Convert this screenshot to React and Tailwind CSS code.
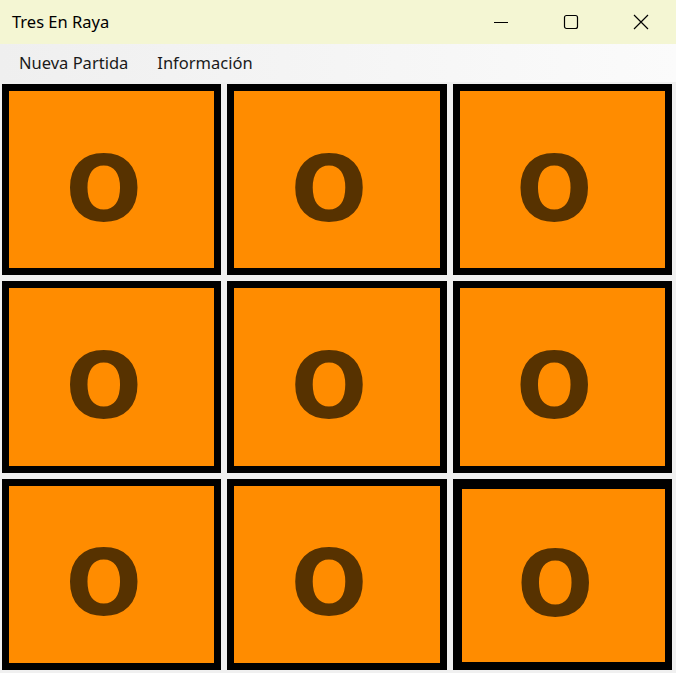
import React from "react";

const cells = Array.from({ length: 9 }, (_, i) => i);

function Cell({ i }) {
  const focused = i === 8;
  return (
    <div
      className={
        "bg-[#ff8c00] border-black flex items-center justify-center pr-[16px] pt-[20px] " +
        (focused ? "border-t-[10px] border-l-[9px] border-r-[7px] border-b-[8px]" : "border-[7px]")
      }
    >
      <span
        className="text-[#573200] font-bold leading-none text-[90px]"
        style={{ fontFamily: '"DejaVu Sans", sans-serif' }}
      >
        O
      </span>
    </div>
  );
}

export default function App() {
  return (
    <div
      className="w-[676px] h-[673px] flex flex-col bg-[#f0f0f0] overflow-hidden"
      style={{ fontFamily: '"Noto Sans", "Open Sans", sans-serif' }}
    >
      <div className="h-[44px] shrink-0 bg-[#f4f6d3] flex items-center">
        <span className="flex-1 pl-[12px] text-[16.5px] text-black">Tres En Raya</span>
        <div className="w-[70px] h-full flex items-center justify-center">
          <svg width="16" height="16" viewBox="0 0 16 16">
            <line x1="1" y1="8.5" x2="15" y2="8.5" stroke="#000" strokeWidth="1" />
          </svg>
        </div>
        <div className="w-[70px] h-full flex items-center justify-center">
          <svg width="16" height="16" viewBox="0 0 16 16">
            <rect x="1.5" y="1.5" width="13" height="13" rx="2" fill="none" stroke="#000" strokeWidth="1.2" />
          </svg>
        </div>
        <div className="w-[70px] h-full flex items-center justify-center">
          <svg width="16" height="16" viewBox="0 0 16 16">
            <path d="M1 1 L15 15 M15 1 L1 15" stroke="#000" strokeWidth="1.2" />
          </svg>
        </div>
      </div>
      <div className="h-[38px] shrink-0 flex items-center bg-gradient-to-r from-[#efefef] to-[#fbfbfb] text-[16.5px] text-[#1a1a1a]">
        <span className="pl-[19px]">Nueva Partida</span>
        <span className="pl-[29px]">Información</span>
      </div>
      <div className="flex-1 grid grid-cols-3 grid-rows-3 gap-[6px] pl-[2px] pr-[4px] pt-[2px] pb-[3px]">
        {cells.map((i) => (
          <Cell key={i} i={i} />
        ))}
      </div>
    </div>
  );
}
